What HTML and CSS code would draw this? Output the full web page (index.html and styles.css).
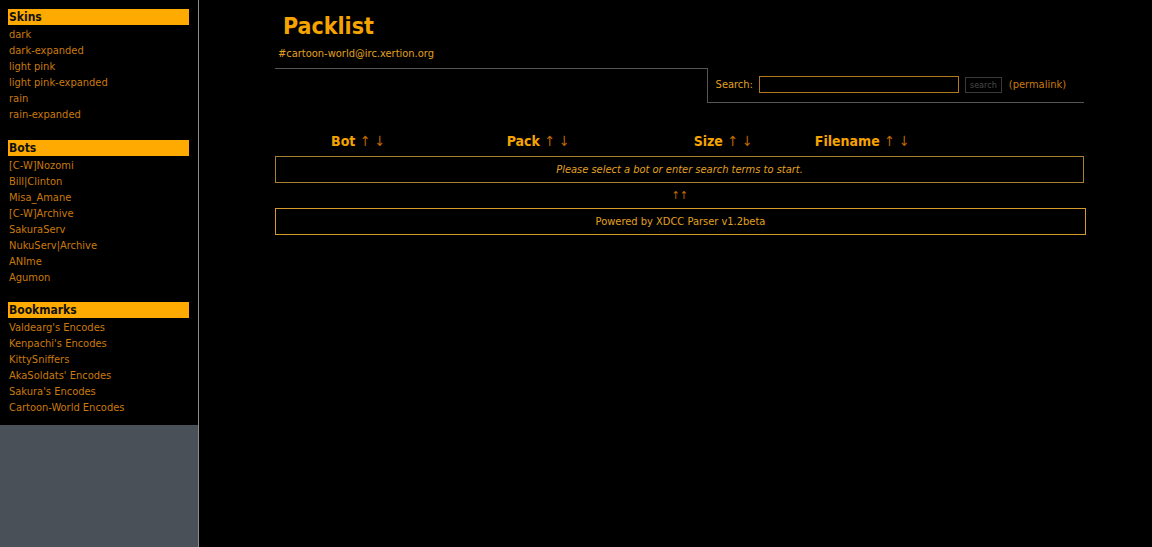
FILE: index.html
```html
<!DOCTYPE html>
<html lang="en">
<head>
    <meta charset="UTF-8">
    <title>Packlist</title>
    <link rel="stylesheet" href="styles.css">
</head>
<body>
    <div class="sidebar">
        <div class="block">
            <div class="block-title">Skins</div>
            <a href="#">dark</a>
            <a href="#">dark-expanded</a>
            <a href="#">light pink</a>
            <a href="#">light pink-expanded</a>
            <a href="#">rain</a>
            <a href="#">rain-expanded</a>
        </div>
        <div class="block">
            <div class="block-title">Bots</div>
            <a href="#">[C-W]Nozomi</a>
            <a href="#">Bill|Clinton</a>
            <a href="#">Misa_Amane</a>
            <a href="#">[C-W]Archive</a>
            <a href="#">SakuraServ</a>
            <a href="#">NukuServ|Archive</a>
            <a href="#">ANIme</a>
            <a href="#">Agumon</a>
        </div>
        <div class="block">
            <div class="block-title">Bookmarks</div>
            <a href="#">Valdearg's Encodes</a>
            <a href="#">Kenpachi's Encodes</a>
            <a href="#">KittySniffers</a>
            <a href="#">AkaSoldats' Encodes</a>
            <a href="#">Sakura's Encodes</a>
            <a href="#">Cartoon-World Encodes</a>
        </div>
    </div>
    <div class="main">
        <div class="content">
            <h1>Packlist</h1>
            <div class="network">#cartoon-world@irc.xertion.org</div>
            <div class="toolbar">
                <div class="toolbar-fill"></div>
                <div class="searchbox">
                    <label for="q">Search:</label>
                    <input type="text" id="q">
                    <button>search</button>
                    <a href="#">(permalink)</a>
                </div>
            </div>
            <div class="columns">
                <div class="col">Bot <span class="arrows">&uarr; &darr;</span></div>
                <div class="col">Pack <span class="arrows">&uarr; &darr;</span></div>
                <div class="col">Size <span class="arrows">&uarr; &darr;</span></div>
                <div class="col">Filename <span class="arrows">&uarr; &darr;</span></div>
                <div></div>
            </div>
            <div class="notice">Please select a bot or enter search terms to start.</div>
            <div class="totop">&uarr;&uarr;</div>
            <div class="footer">Powered by XDCC Parser v1.2beta</div>
        </div>
    </div>
</body>
</html>
```

FILE: styles.css
```css
body {
    margin: 0;
    background-color: #4a5058;
    font-family: 'DejaVu Sans Condensed', 'DejaVu Sans', sans-serif;
    font-size: 11px;
    color: #e0a020;
    display: flex;
    align-items: flex-start;
    min-height: 100vh;
}
a {
    text-decoration: none;
    color: #c97a0c;
}
.sidebar {
    width: 198px;
    background-color: #000;
    padding: 9px 9px 9px 8px;
    box-sizing: border-box;
    flex-shrink: 0;
}
.block {
    margin-bottom: 16.5px;
}
.block:last-child {
    margin-bottom: 0;
}
.block-title {
    background-color: #ffaa00;
    color: #111;
    font-weight: bold;
    font-size: 12px;
    line-height: 16px;
    padding-left: 1px;
    width: 180px;
    margin-bottom: 2px;
}
.block a {
    display: block;
    line-height: 16px;
    padding-left: 1px;
}
.main {
    flex: 1;
    align-self: stretch;
    background-color: #000;
    border-left: 1px solid #8c8c8c;
    min-height: 100vh;
}
.content {
    width: 811px;
    margin-left: 76px;
}
h1 {
    margin: 11px 0 0 8px;
    font-size: 23px;
    line-height: 30px;
    color: #f5a300;
}
.network {
    margin: 6px 0 0 3px;
    line-height: 14px;
}
.toolbar {
    display: flex;
    margin-top: 7px;
    width: 809px;
}
.toolbar-fill {
    flex: 1;
    border-top: 1px solid #555;
}
.searchbox {
    border-left: 1px solid #555;
    border-bottom: 1px solid #555;
    padding: 8px 18px 9px 8px;
    display: flex;
    align-items: center;
    gap: 6px;
}
.searchbox input {
    width: 196px;
    height: 13px;
    background-color: #000;
    border: 1px solid #b07a1c;
    padding: 1px;
}
.searchbox button {
    background-color: #000;
    border: 1px solid #3a3a3a;
    color: #4a4a4a;
    font-family: 'DejaVu Sans Condensed', sans-serif;
    font-size: 9px;
    height: 16px;
    padding: 0 4px;
}
.searchbox a {
    margin-left: 1px;
}
.columns {
    display: grid;
    grid-template-columns: 166px 194px 176px 102px 1fr;
    margin-top: 28px;
    width: 809px;
    font-size: 14px;
    font-weight: bold;
    color: #f5a300;
    line-height: 20px;
    text-align: center;
}
.arrows {
    font-weight: normal;
    color: #c06a00;
}
.notice {
    width: 807px;
    margin-top: 5px;
    border: 1px solid #a8802e;
    text-align: center;
    font-style: italic;
    line-height: 25px;
}
.totop {
    width: 809px;
    text-align: center;
    color: #c06a00;
    line-height: 14px;
    margin-top: 6px;
}
.footer {
    width: 809px;
    margin-top: 5px;
    border: 1px solid #d49a2a;
    text-align: center;
    line-height: 25px;
}
```
